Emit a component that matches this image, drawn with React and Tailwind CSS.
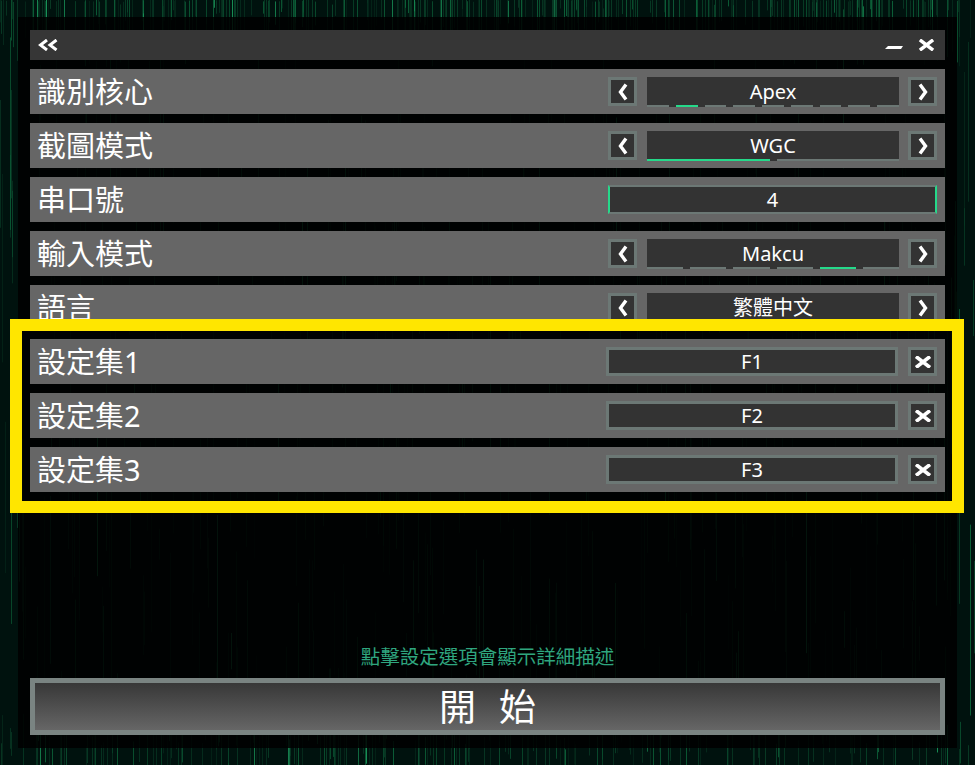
import React from "react";

const FONT = "font-['Noto_Sans','Noto_Sans_CJK_TC',sans-serif]";

// seeded so the rain is the same on every load
function makeRain() {
  let seed = 1337;
  const rnd = () => {
    seed = (seed * 16807) % 2147483647;
    return seed / 2147483647;
  };
  const lines = [];
  for (let i = 0; i < 1000; i++) {
    const x = Math.floor(rnd() * 975) + 0.5;
    const roll = rnd();
    const bright = rnd();
    let y1;
    let len;
    if (roll < 0.38) {
      y1 = -10 + rnd() * 12;
      len = 12 + rnd() * 55;
    } else if (roll < 0.55) {
      y1 = 700 + rnd() * 50;
      len = 20 + rnd() * 50;
    } else {
      y1 = rnd() * 720;
      len = 30 + rnd() * 170;
    }
    lines.push({
      x,
      y1,
      y2: y1 + len,
      color: bright > 0.93 ? "#1a9a5c" : bright > 0.6 ? "#0c6239" : "#083a25",
      opacity: 0.35 + rnd() * 0.6,
    });
  }
  return lines;
}

const rain = makeRain();

function Chevron({ dir }) {
  return (
    <svg width="12" height="18" viewBox="0 0 12 18">
      <path
        d={dir === "left" ? "M9 1.5 L3.5 9 L9 16.5" : "M3 1.5 L8.5 9 L3 16.5"}
        fill="none"
        stroke="#fff"
        strokeWidth="3.4"
      />
    </svg>
  );
}

function Cross({ w = 18, h = 12 }) {
  return (
    <svg width={w} height={h} viewBox="0 0 18 12">
      <path d="M2 0.5 L16 11.5 M16 0.5 L2 11.5" fill="none" stroke="#fff" strokeWidth="3.6" />
    </svg>
  );
}

function IconButton({ children }) {
  return (
    <button className="flex h-[29px] w-[29px] shrink-0 items-center justify-center border-[3px] border-[#6c7875] bg-[#333333]">
      {children}
    </button>
  );
}

function Row({ label, children }) {
  return (
    <div className="flex h-[45px] items-center justify-between bg-[#666666] pl-[7px] pr-2">
      <span className="text-[29px] leading-none text-white">{label}</span>
      {children}
    </div>
  );
}

function Selector({ label, segments = [] }) {
  return (
    <div className="flex items-center">
      <IconButton>
        <Chevron dir="left" />
      </IconButton>
      <div className="relative ml-[10px] mr-[9px] flex h-[30px] w-[252px] items-center justify-center bg-[#333333] text-[20px] text-white">
        <span>{label}</span>
        {segments.length > 0 && (
          <div className="absolute inset-x-0 bottom-0 flex gap-[7px]">
            {segments.map((on, i) => (
              <div key={i} className={`h-[2px] flex-1 ${on ? "bg-[#25d98a]" : "bg-[#6c7875]"}`} />
            ))}
          </div>
        )}
      </div>
      <IconButton>
        <Chevron dir="right" />
      </IconButton>
    </div>
  );
}

function Preset({ label, hotkey }) {
  return (
    <Row label={label}>
      <div className="flex items-center">
        <div className="mr-[10px] flex h-[29px] w-[292px] items-center justify-center border-[3px] border-[#6c7875] bg-[#333333] text-[20px] text-white">
          {hotkey}
        </div>
        <IconButton>
          <Cross />
        </IconButton>
      </div>
    </Row>
  );
}

export default function App() {
  return (
    <div className={`relative h-[765px] w-[975px] overflow-hidden bg-[#00120e] ${FONT}`}>
      <svg className="absolute inset-0" width="975" height="765">
        {rain.map((l, i) => (
          <line key={i} x1={l.x} x2={l.x} y1={l.y1} y2={l.y2} stroke={l.color} strokeOpacity={l.opacity} />
        ))}
      </svg>

      <div className="absolute left-[18px] top-[17px] flex h-[731px] w-[939px] flex-col bg-black/85 px-3 pb-[13px] pt-[13px]">
        <div className="flex h-[30px] shrink-0 items-center justify-between bg-[#363636] px-2">
          <svg width="20" height="12" viewBox="0 0 20 12">
            <path d="M9 1 L2.5 6 L9 11 M18.5 1 L12 6 L18.5 11" fill="none" stroke="#fff" strokeWidth="3" />
          </svg>
          <div className="flex items-center gap-[15px] pr-[2px]">
            <svg width="18" height="12" viewBox="0 0 18 12">
              <path d="M3 7 H18 L16 10 H0 Z" fill="#fff" />
            </svg>
            <Cross w={17} h={12} />
          </div>
        </div>

        <div className="mt-[9px] flex flex-col gap-[9px]">
          <Row label="識別核心">
            <Selector label="Apex" segments={[false, true, false, false, false, false, false, false, false]} />
          </Row>
          <Row label="截圖模式">
            <Selector label="WGC" segments={[true, false]} />
          </Row>
          <Row label="串口號">
            <div className="flex h-[29px] w-[329px] items-center justify-center border-x-[2px] border-y-[2px] border-x-[#25d98a] border-y-[#6c7875] bg-[#333333] text-[20px] text-white">
              4
            </div>
          </Row>
          <Row label="輸入模式">
            <Selector label="Makcu" segments={[false, false, false, false, true, false]} />
          </Row>
          <Row label="語言">
            <Selector label="繁體中文" />
          </Row>
          <Preset label="設定集1" hotkey="F1" />
          <Preset label="設定集2" hotkey="F2" />
          <Preset label="設定集3" hotkey="F3" />
        </div>

        <div className="mt-auto flex flex-col items-center">
          <p className="mb-[8px] text-[19.5px] leading-[26px] text-[#2fa67f]">點擊設定選項會顯示詳細描述</p>
          <button className="flex h-[57px] w-full items-center justify-center gap-[23px] border-[5px] border-[#7a8482] bg-gradient-to-b from-[#383838] to-[#666666] text-[37px] leading-none text-white">
            <span>開</span>
            <span>始</span>
          </button>
        </div>
      </div>

      {/* highlight frame drawn over the screenshot */}
      <div className="pointer-events-none absolute left-[10px] top-[319px] h-[194px] w-[954px] border-[12px] border-[#ffe600]" />
    </div>
  );
}
